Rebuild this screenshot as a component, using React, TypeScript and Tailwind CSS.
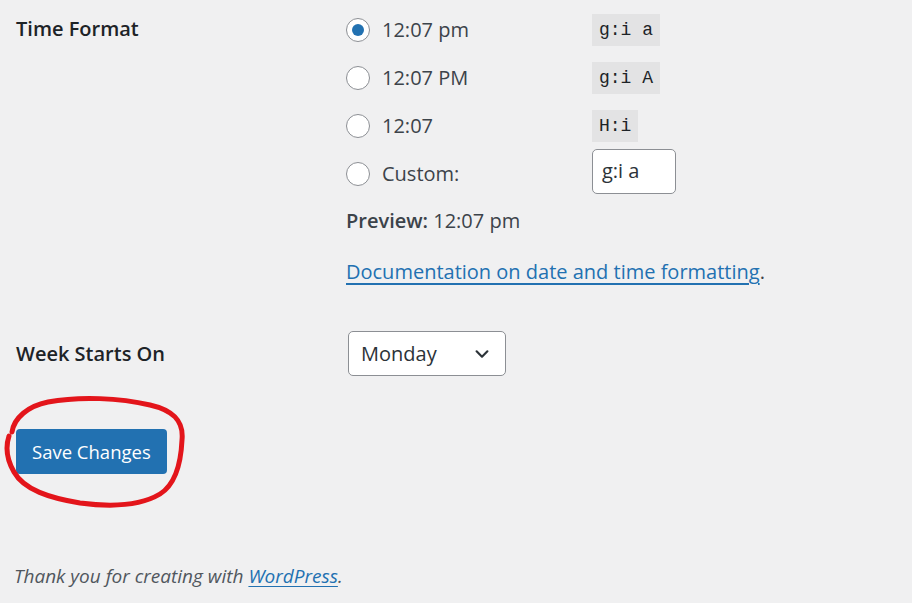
import React from "react";

const font = { fontFamily: '"Open Sans", "Noto Sans", sans-serif' };

const Radio = ({ checked = false }: { checked?: boolean }) => (
  <span className="flex h-[24px] w-[24px] shrink-0 items-center justify-center rounded-full border border-[#8c8f94] bg-white">
    {checked && <span className="h-[12px] w-[12px] rounded-full bg-[#2271b1]" />}
  </span>
);

const Code = ({ children }: { children: React.ReactNode }) => (
  <code className="bg-[#e3e3e4] px-[7px] py-[4px] font-['Liberation_Mono',monospace] text-[18px] leading-[24px] text-[#1d2327]">
    {children}
  </code>
);

const options = [
  { label: "12:07 pm", code: "g:i a", checked: true },
  { label: "12:07 PM", code: "g:i A" },
  { label: "12:07", code: "H:i" },
];

export default function App() {
  return (
    <div
      className="relative h-[603px] w-[912px] overflow-hidden bg-[#f0f0f1] text-[20px] text-[#3c434a]"
      style={font}
    >
      <div className="flex pt-[6px]">
        <div className="w-[346px] shrink-0 pl-[16px] pt-[8px] font-semibold text-[#1d2327]">
          Time Format
        </div>
        <div className="flex flex-col">
          {options.map((o) => (
            <div key={o.code} className="flex h-[48px] items-center">
              <div className="flex w-[246px] items-center gap-[12px]">
                <Radio checked={o.checked} />
                <span>{o.label}</span>
              </div>
              <Code>{o.code}</Code>
            </div>
          ))}
          <div className="flex h-[48px] items-center">
            <div className="flex w-[246px] items-center gap-[12px]">
              <Radio />
              <span>Custom:</span>
            </div>
            <div className="mb-[6px] flex h-[45px] w-[84px] items-center rounded-[5px] border border-[#8c8f94] bg-white px-[9px] text-[#2c3338]">
              g:i a
            </div>
          </div>
          <div className="mt-[10px] leading-[26px]">
            <span className="font-semibold text-[#3c434a]">Preview:</span> 12:07 pm
          </div>
          <div className="mt-[25px] leading-[26px]">
            <a className="text-[#2271b1] underline decoration-[1.5px] underline-offset-[4px]">
              Documentation on date and time formatting
            </a>
            .
          </div>
        </div>
      </div>

      <div className="mt-[46px] flex items-center">
        <div className="w-[348px] shrink-0 pl-[16px] font-semibold text-[#1d2327]">
          Week Starts On
        </div>
        <div className="flex h-[45px] w-[158px] items-center justify-between rounded-[5px] border border-[#8c8f94] bg-white pl-[12px] pr-[14px] text-[#2c3338]">
          <span>Monday</span>
          <svg width="18" height="18" viewBox="0 0 20 20" fill="none">
            <path d="M4 7l6 6 6-6" stroke="#2c3338" strokeWidth="2.4" strokeLinecap="round" strokeLinejoin="round" />
          </svg>
        </div>
      </div>

      <div className="mt-[53px] pl-[16px]">
        <button className="flex h-[45px] items-center rounded-[4px] bg-[#2271b1] px-[16px] text-[18.5px] text-white">
          Save Changes
        </button>
      </div>

      <svg className="pointer-events-none absolute left-0 top-0" width="912" height="603">
        <path
          d="M12 432 C 14 418, 28 406, 48 402 C 80 396, 120 398, 150 405 C 172 410, 184 420, 182 440 C 181 462, 176 484, 160 494 C 140 506, 110 507, 80 503 C 50 498, 24 490, 14 472 C 6 458, 6 445, 9 436"
          fill="none"
          stroke="#e3151b"
          strokeWidth="5"
          strokeLinecap="round"
        />
      </svg>

      <div className="absolute bottom-[13px] left-[14px] text-[19px] italic text-[#50575e]">
        Thank you for creating with{" "}
        <a className="text-[#2271b1] underline underline-offset-[3px]">WordPress</a>.
      </div>
    </div>
  );
}
